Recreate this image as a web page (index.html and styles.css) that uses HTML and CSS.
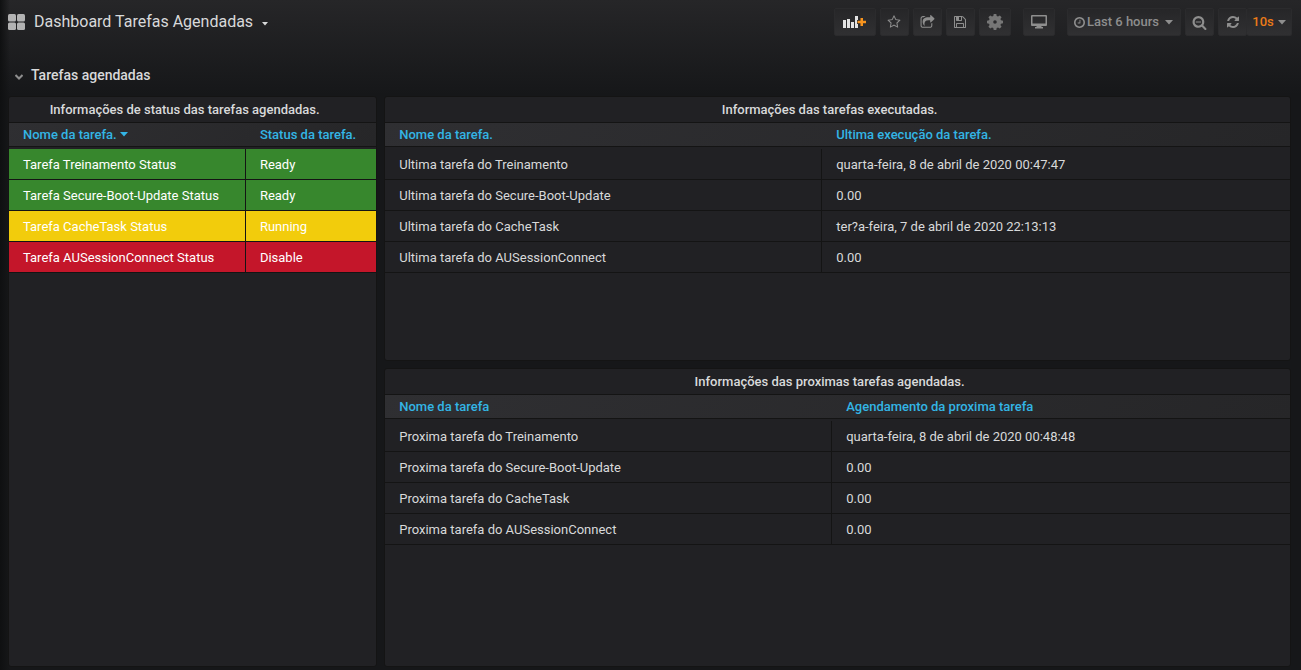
FILE: index.html
```
<!DOCTYPE html>
<html lang="pt-BR">
<head>
  <meta charset="utf-8">
  <title>Dashboard Tarefas Agendadas</title>
  <link rel="stylesheet" href="styles.css">
</head>
<body>
  <header class="navbar">
    <button class="nav-title">
      <svg class="icon-apps" viewBox="0 0 17 16"><rect width="8" height="7.500" rx="1.500"/><rect x="9" width="8" height="7.500" rx="1.500"/><rect y="8.500" width="8" height="7.500" rx="1.500"/><rect x="9" y="8.500" width="8" height="7.500" rx="1.500"/></svg>
      <span>Dashboard Tarefas Agendadas</span>
      <svg class="caret-small" viewBox="0 0 6 4"><path d="M0 0h6L3 3.500z"/></svg>
    </button>

    <div class="nav-buttons">
      <button class="nav-button nav-button-add" aria-label="Add panel">
        <svg class="icon-add" viewBox="0 0 23 14"><path class="bars" d="M0 5h3v8H0zM4 4h3v9H4zM8 7h3v6H8zM12 1h3v4h-1v4h1v4h-3z"/><path class="plus" d="M17.500 3h2.500v2.700h3v2.600h-3V11h-2.500V8.300H14.500V5.700h3z"/></svg>
      </button>
      <button class="nav-button" aria-label="Mark as favorite">
        <svg class="icon" viewBox="0 0 1792 1792"><path d="M1201 1004l306-297-422-62-189-382-189 382-422 62 306 297-73 421 378-199 377 199zm527-357q0 22-26 48l-363 354 86 500q1 7 1 20 0 50-41 50-19 0-40-12l-449-236-449 236q-22 12-40 12-21 0-31.500-14.500t-10.500-35.500q0-6 2-20l86-500-364-354q-25-27-25-48 0-37 56-46l502-73 225-455q19-41 49-41t49 41l225 455 502 73q56 9 56 46z"/></svg>
      </button>
      <button class="nav-button" aria-label="Share dashboard">
        <svg class="icon icon-large" viewBox="0 0 1792 1792"><path d="M1472 989v259q0 119-84.500 203.500t-203.500 84.500h-832q-119 0-203.500-84.500t-84.500-203.500v-832q0-119 84.500-203.500t203.500-84.500h255q13 0 22.500 9.500t9.500 22.500q0 27-26 32-77 26-133 60-10 4-16 4h-112q-66 0-113 47t-47 113v832q0 66 47 113t113 47h832q66 0 113-47t47-113v-214q0-19 18-29 28-13 54-37 16-16 35-8 21 9 21 29zm237-496l-384 384q-18 19-45 19-12 0-25-5-39-17-39-59v-192h-160q-323 0-438 131-119 137-74 473 3 23-20 34-8 2-12 2-16 0-26-13-10-14-21-31t-39.500-68.500-49.500-99.500-38.500-114-17.500-122q0-49 3.500-91t14-90 28-88 47-81.500 68.500-74 94.500-61.500 124.500-48.500 159.500-30.500 196.500-11h160v-192q0-42 39-59 13-5 25-5 26 0 45 19l384 384q19 19 19 45t-19 45z"/></svg>
      </button>
      <button class="nav-button" aria-label="Save dashboard">
        <svg class="icon" viewBox="0 0 1792 1792"><path d="M512 1536h768v-384h-768v384zm896 0h128v-896q0-14-10-38.500t-20-34.500l-281-281q-10-10-34-20t-39-10v416q0 40-28 68t-68 28h-576q-40 0-68-28t-28-68v-416h-128v1280h128v-416q0-40 28-68t68-28h832q40 0 68 28t28 68v416zm-384-928v-320q0-13-9.500-22.500t-22.500-9.500h-192q-13 0-22.500 9.500t-9.500 22.500v320q0 13 9.500 22.500t22.500 9.500h192q13 0 22.500-9.500t9.500-22.500zm640 32v928q0 40-28 68t-68 28h-1344q-40 0-68-28t-28-68v-1344q0-40 28-68t68-28h928q40 0 88 20t76 48l280 280q28 28 48 76t20 88z"/></svg>
      </button>
      <button class="nav-button nav-button-wide" aria-label="Dashboard settings">
        <svg class="icon-cog" viewBox="0 0 16 16"><path fill-rule="evenodd" d="M6.700 0h2.600l.4 2 1.300.6L12.800 1.400l1.800 1.800L13.400 5l.6 1.300 2 .4v2.600l-2 .4-.6 1.300 1.200 1.800-1.800 1.800-1.800-1.200-1.300.6-.4 2H6.700l-.4-2-1.300-.6-1.800 1.200-1.800-1.800L2.600 11 2 9.700l-2-.4V6.700l2-.4L2.600 5 1.400 3.200l1.800-1.800L5 2.600 6.300 2zM8 6.200a1.800 1.800 0 1 0 0 3.600 1.800 1.800 0 0 0 0-3.600z"/></svg>
      </button>

      <button class="nav-button nav-button-wide nav-group" aria-label="Cycle view mode">
        <svg class="icon-desktop" viewBox="0 0 16 14"><path fill-rule="evenodd" d="M1 0h14q1 0 1 1v9q0 1-1 1h-4.500v1H12v1.500H4V12h1.500v-1H1q-1 0-1-1V1q0-1 1-1zm.5 1.500v7h13v-7z"/></svg>
      </button>

      <button class="nav-button nav-button-time nav-group">
        <svg class="icon-clock" viewBox="128 128 1536 1536"><path d="M1024 544v448q0 14-9 23t-23 9h-320q-14 0-23-9t-9-23v-64q0-14 9-23t23-9h224v-352q0-14 9-23t23-9h64q14 0 23 9t9 23zm416 352q0-148-73-273t-198-198-273-73-273 73-198 198-73 273 73 273 198 198 273 73 273-73 198-198 73-273zm224 0q0 209-103 385.500t-279.500 279.500-385.500 103-385.500-103-279.500-279.500-103-385.500 103-385.500 279.500-279.500 385.500-103 385.500 103 279.500 279.500 103 385.500z"/></svg>
        <span>Last 6 hours</span>
        <svg class="caret" viewBox="0 0 8 5"><path d="M0 0h8L4 4.500z"/></svg>
      </button>
      <button class="nav-button" aria-label="Zoom out">
        <svg class="icon icon-large" viewBox="0 0 1792 1792"><path d="M1088 800v64q0 13-9.500 22.500t-22.500 9.500h-576q-13 0-22.500-9.500t-9.500-22.500v-64q0-13 9.500-22.500t22.500-9.500h576q13 0 22.500 9.500t9.500 22.500zm128 32q0-185-131.500-316.500t-316.500-131.500-316.500 131.500-131.500 316.500 131.500 316.500 316.500 131.500 316.500-131.500 131.500-316.500zm512 832q0 53-37.500 90.500t-90.500 37.500q-54 0-90-38l-343-342q-179 124-399 124-143 0-273.500-55.500t-225-150-150-225-55.500-273.500 55.500-273.500 150-225 225-150 273.500-55.500 273.500 55.500 225 150 150 225 55.500 273.500q0 220-124 399l343 343q37 37 37 90z"/></svg>
      </button>
      <div class="refresh-picker">
        <button class="nav-button" aria-label="Refresh dashboard">
          <svg class="icon" viewBox="0 0 1792 1792"><path d="M1639 1056q0 5-1 7-64 268-268 434.500t-478 166.500q-146 0-282.500-55t-243.500-157l-129 129q-19 19-45 19t-45-19-19-45v-448q0-26 19-45t45-19h448q26 0 45 19t19 45-19 45l-137 137q71 66 161 102t187 36q134 0 250-65t186-179q11-17 53-117 8-23 30-23h192q13 0 22.500 9.500t9.500 22.500zm25-800v448q0 26-19 45t-45 19h-448q-26 0-45-19t-19-45 19-45l138-138q-148-137-349-137-134 0-250 65t-186 179q-11 17-53 117-8 23-30 23h-199q-13 0-22.500-9.500t-9.500-22.500v-7q65-268 270-434.500t480-166.500q146 0 284 55.500t245 156.500l130-129q19-19 45-19t45 19 19 45z"/></svg>
        </button>
        <button class="nav-button nav-button-interval">
          <span class="interval">10s</span>
          <svg class="caret" viewBox="0 0 8 5"><path d="M0 0h8L4 4.500z"/></svg>
        </button>
      </div>
    </div>
  </header>

  <main class="dashboard">
    <button class="row-title">
      <svg class="icon-chevron" viewBox="0 0 8 6"><path d="M.5 1L4 4.500 7.500 1"/></svg>
      <span>Tarefas agendadas</span>
    </button>

    <div class="panel-grid">
      <section class="panel panel-status">
        <h2 class="panel-title">Informações de status das tarefas agendadas.</h2>
        <table class="table table-status">
          <thead>
            <tr>
              <th><button class="sort">Nome da tarefa.<svg class="caret" viewBox="0 0 8 5"><path d="M0 0h8L4 4.500z"/></svg></button></th>
              <th><button class="sort">Status da tarefa.</button></th>
            </tr>
          </thead>
          <tbody>
            <tr class="ok"><td>Tarefa Treinamento Status</td><td>Ready</td></tr>
            <tr class="ok"><td>Tarefa Secure-Boot-Update Status</td><td>Ready</td></tr>
            <tr class="warning"><td>Tarefa CacheTask Status</td><td>Running</td></tr>
            <tr class="critical"><td>Tarefa AUSessionConnect Status</td><td>Disable</td></tr>
          </tbody>
        </table>
      </section>

      <section class="panel">
        <h2 class="panel-title">Informações das tarefas executadas.</h2>
        <table class="table table-last">
          <thead>
            <tr>
              <th><button class="sort">Nome da tarefa.</button></th>
              <th><button class="sort">Ultima execução da tarefa.</button></th>
            </tr>
          </thead>
          <tbody>
            <tr><td>Ultima tarefa do Treinamento</td><td>quarta-feira, 8 de abril de 2020 00:47:47</td></tr>
            <tr><td>Ultima tarefa do Secure-Boot-Update</td><td>0.00</td></tr>
            <tr><td>Ultima tarefa do CacheTask</td><td>ter?a-feira, 7 de abril de 2020 22:13:13</td></tr>
            <tr><td>Ultima tarefa do AUSessionConnect</td><td>0.00</td></tr>
          </tbody>
        </table>
      </section>

      <section class="panel">
        <h2 class="panel-title">Informações das proximas tarefas agendadas.</h2>
        <table class="table table-next">
          <thead>
            <tr>
              <th><button class="sort">Nome da tarefa</button></th>
              <th><button class="sort">Agendamento da proxima tarefa</button></th>
            </tr>
          </thead>
          <tbody>
            <tr><td>Proxima tarefa do Treinamento</td><td>quarta-feira, 8 de abril de 2020 00:48:48</td></tr>
            <tr><td>Proxima tarefa do Secure-Boot-Update</td><td>0.00</td></tr>
            <tr><td>Proxima tarefa do CacheTask</td><td>0.00</td></tr>
            <tr><td>Proxima tarefa do AUSessionConnect</td><td>0.00</td></tr>
          </tbody>
        </table>
      </section>
    </div>
  </main>
</body>
</html>
```
FILE: styles.css
```
* {
  box-sizing: border-box;
}

body {
  margin: 0;
  min-height: 100vh;
  display: flex;
  flex-direction: column;
  font-family: Roboto, "Liberation Sans", sans-serif;
  font-size: 13px;
  line-height: 20px;
  color: #d8d9da;
  background: linear-gradient(90deg, #0f1011, rgba(15, 16, 17, 0) 10px),
    linear-gradient(180deg, #262628 0, #161719 95px) #161719;
}

button {
  margin: 0;
  padding: 0;
  border: none;
  background: none;
  color: inherit;
  font: inherit;
  cursor: pointer;
}

svg {
  display: block;
  flex: none;
  fill: currentColor;
}

/* Top bar */
.navbar {
  display: flex;
  justify-content: space-between;
  align-items: center;
  height: 44px;
  padding: 0 9px 0 8px;
}

.nav-title {
  display: flex;
  align-items: center;
  gap: 9px;
  font-size: 16px;
  line-height: 22px;
}

.icon-apps {
  width: 17px;
  height: 16px;
  color: #b3b3b3;
}

.caret-small {
  width: 6px;
  height: 4px;
  margin-top: 4px;
}

.nav-buttons {
  display: flex;
  gap: 4px;
}

.nav-button {
  display: flex;
  align-items: center;
  justify-content: center;
  width: 29px;
  height: 28px;
  border: 1px solid #2b2b2d;
  border-radius: 2px;
  background: linear-gradient(180deg, #262628, #303032);
  color: #8e8e8e;
  font-weight: 500;
}

.nav-button:hover {
  color: #d8d9da;
}

.nav-button-add {
  width: 42px;
}

.nav-button-wide {
  width: 32px;
}

.nav-group {
  margin-left: 8px;
}

.nav-button-time {
  width: auto;
  padding: 0 7px 0 6px;
  gap: 2px;
}

.nav-button-time .caret {
  margin-left: 4px;
}

.refresh-picker {
  display: flex;
}

.nav-button-interval {
  width: 45px;
  gap: 4px;
  border-left: none;
}

.interval {
  color: #eb7b18;
}

.icon {
  width: 14px;
  height: 14px;
}

.icon-large {
  width: 15px;
  height: 15px;
}

.icon-add {
  width: 23px;
  height: 14px;
}

.icon-add .bars {
  fill: #e3e3e3;
}

.icon-add .plus {
  fill: #f7941e;
}

.icon-cog {
  width: 16px;
  height: 16px;
  color: #767676;
}

.icon-desktop {
  width: 16px;
  height: 14px;
}

.icon-clock {
  width: 11px;
  height: 11px;
}

.caret {
  width: 8px;
  height: 5px;
}

/* Dashboard */
.dashboard {
  flex: 1;
  display: flex;
  flex-direction: column;
  padding: 20px 10px 3px 8px;
}

.row-title {
  display: flex;
  align-items: center;
  align-self: flex-start;
  gap: 8px;
  height: 22px;
  margin-bottom: 10px;
  padding-left: 7px;
  font-size: 14px;
  font-weight: 500;
}

.icon-chevron {
  width: 8px;
  height: 6px;
  margin-top: 4px;
  fill: none;
  stroke: #8e8e8e;
  stroke-width: 2;
}

.panel-grid {
  flex: 1;
  display: grid;
  grid-template-columns: repeat(24, 1fr);
  grid-template-rows: 8fr 9fr;
  gap: 7px;
}

.panel {
  grid-column: span 17;
  border: 1px solid #141414;
  border-radius: 3px;
  background: #212124;
}

.panel-status {
  grid-column: span 7;
  grid-row: span 2;
}

.panel-title {
  margin: 0;
  padding: 3px 16px 2px 0;
  font-size: 13px;
  font-weight: 500;
  text-align: center;
}

/* Tables */
.table {
  width: 100%;
  border-spacing: 0;
  table-layout: fixed;
}

.table thead tr {
  background: linear-gradient(135deg, #2f2f32, #262628);
}

.table th {
  height: 25px;
  padding: 0 0 0 14px;
  border-top: 1px solid #141414;
  border-bottom: 1px solid #141414;
  text-align: left;
}

.table tbody::before {
  content: "";
  display: block;
  height: 2px;
}

.table td {
  height: 31px;
  padding: 1px 0 0 14px;
  border-bottom: 1px solid #141414;
}

.table td:first-child {
  border-right: 1px solid #141414;
}

.table-status th:first-child {
  width: 64.5%;
}

.table-last th:first-child {
  width: 48.3%;
}

.table-next th:first-child {
  width: 49.4%;
}

.sort {
  display: flex;
  align-items: center;
  gap: 3px;
  color: #33b5e5;
  font-weight: 500;
}

.ok,
.warning,
.critical {
  color: #fff;
}

.ok {
  background: #37872d;
}

.warning {
  background: #f2cc0c;
}

.critical {
  background: #c4162a;
}
```
